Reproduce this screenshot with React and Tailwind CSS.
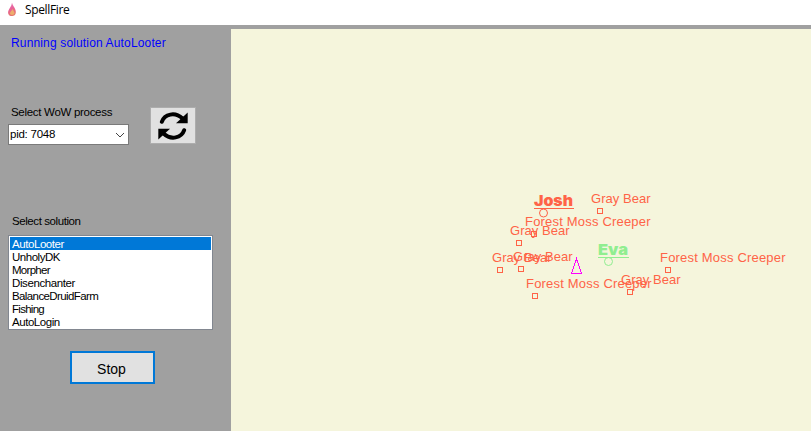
import React from "react";

const solutions = [
  ["AutoLooter", "tracking-[-0.43px]"],
  ["UnholyDK", "tracking-[-0.48px]"],
  ["Morpher", "tracking-[-0.72px]"],
  ["Disenchanter", "tracking-[-0.4px]"],
  ["BalanceDruidFarm", "tracking-[-0.6px]"],
  ["Fishing", "tracking-[-0.72px]"],
  ["AutoLogin", "tracking-[-0.45px]"],
];

// Each unit has a label start, a label baseline and a marker centre.
const units = [
  { name: "Gray Bear", x: 591, y: 203, mx: 600, my: 211 },
  { name: "Forest Moss Creeper", x: 525, y: 226, mx: 534, my: 234 },
  { name: "Gray Bear", x: 510, y: 235, mx: 519, my: 243 },
  { name: "Gray Bear", x: 492, y: 262, mx: 500, my: 270 },
  { name: "Gray Bear", x: 513, y: 261, mx: 521, my: 269 },
  { name: "Forest Moss Creeper", x: 526, y: 288, mx: 535, my: 296 },
  { name: "Gray Bear", x: 621, y: 284, mx: 630, my: 292 },
  { name: "Forest Moss Creeper", x: 660, y: 262, mx: 668, my: 270 },
];

const players = [
  { name: "Josh", x: 534, y: 206, w: 39, mx: 543.5, my: 213, color: "#ff6347" },
  { name: "Eva", x: 598, y: 255, w: 30, mx: 608.5, my: 261.5, color: "#90ee90" },
];

function Flame() {
  return (
    <svg className="h-4 w-4 shrink-0" viewBox="0 0 16 16">
      <defs>
        <linearGradient id="flame" x1="0" y1="0" x2="0.3" y2="1">
          <stop offset="0" stopColor="#e58cc0" />
          <stop offset="0.5" stopColor="#e9609a" />
          <stop offset="1" stopColor="#e5776c" />
        </linearGradient>
      </defs>
      <path d="M8 0.800C8.500 3.500 10.500 5 11.300 7.500C12.600 11 11.500 13.800 8.300 14C5 14.200 3.500 12 4.300 9C5 6.500 7.600 4.500 8 0.800Z" fill="url(#flame)" />
      <path d="M8.500 7C8 9 6 9.500 6 11.500C6 13.500 10.500 13.500 10.500 11C10.500 9.500 9 8.500 8.500 7Z" fill="#edae6d" />
    </svg>
  );
}

function RefreshIcon() {
  return (
    <svg className="h-[30px] w-[30px]" viewBox="0 0 30 30">
      <path d="M3.800 10.800C6.500 3 17 0.500 24.500 7.500" fill="none" stroke="#000" strokeWidth="4" strokeLinecap="round" />
      <path d="M29.700 1.500V12.300H18Z" />
      <path d="M26.200 19.200C23.500 27 13 29.500 5.500 22.500" fill="none" stroke="#000" strokeWidth="4" strokeLinecap="round" />
      <path d="M0.300 28.500V17.700H12Z" />
    </svg>
  );
}

function Radar() {
  return (
    <svg className="block h-[402px] w-[580px] font-['Liberation_Sans',Arial,sans-serif]" viewBox="231 29 580 402">
      {units.map((u) => (
        <g key={`${u.mx}-${u.my}`}>
          <text x={u.x} y={u.y} fontSize="13" fill="#ff6347" textLength={u.name === "Gray Bear" ? 59.5 : 125.5}>
            {u.name}
          </text>
          <rect x={u.mx - 2.5} y={u.my - 2.5} width="5" height="5" fill="none" stroke="#ff6347" shapeRendering="crispEdges" />
        </g>
      ))}
      {players.map((p) => (
        <g key={p.name}>
          <text className="font-['Inter','Liberation_Sans',sans-serif] font-black" x={p.x} y={p.y} fontSize="15" fill={p.color} textLength={p.w} lengthAdjust="spacingAndGlyphs">
            {p.name}
          </text>
          <rect x={p.x} y={p.y + 2} width={p.w + 1} height="1" fill={p.color} />
          <circle cx={p.mx} cy={p.my} r="4" fill="none" stroke={p.color} />
        </g>
      ))}
      <path d="M576.500 259L571.500 273.500H581.500Z" fill="none" stroke="#ff00ff" shapeRendering="crispEdges" />
    </svg>
  );
}

export default function App() {
  return (
    <div className="flex h-[431px] w-[811px] flex-col overflow-hidden bg-[#a0a0a0] font-['Liberation_Sans',Arial,sans-serif] text-black">
      <header className="flex h-[25px] shrink-0 items-start gap-[5px] bg-white pl-1 pt-[2px]">
        <Flame />
        <span className="font-['Open_Sans','Noto_Sans',sans-serif] text-[12px] leading-4 tracking-[-0.35px]">SpellFire</span>
      </header>
      <div className="flex min-h-0 flex-1">
        <aside className="flex w-[231px] shrink-0 flex-col pl-2">
          <p className="mt-[10px] pl-[3px] text-[12px] leading-4 tracking-[0.15px] text-[#0000ff]">Running solution AutoLooter</p>
          <div className="mt-[53px] flex">
            <div className="w-[121px]">
              <p className="pl-[3px] text-[11.5px] leading-4 tracking-[-0.3px]">Select WoW process</p>
              <div className="mt-1 flex h-[21px] items-center justify-between border border-[#7a7a7a] bg-white pl-[1px] pr-[3px] text-[11.5px] tracking-[-0.25px]">
                <span>pid: 7048</span>
                <svg className="h-[6px] w-[10px]" viewBox="0 0 10 6">
                  <path d="M1 1L5 5L9 1" fill="none" stroke="#444" />
                </svg>
              </div>
            </div>
            <button className="ml-[21px] mt-[3px] flex h-[37px] w-[46px] items-center justify-center border border-[#adadad] bg-[#e1e1e1]">
              <RefreshIcon />
            </button>
          </div>
          <p className="mt-[68px] pl-1 text-[11.5px] leading-4 tracking-[-0.42px]">Select solution</p>
          <ul className="mt-[6px] h-[95px] w-[205px] border border-[#828790] bg-white p-px">
            {solutions.map(([name, spacing], i) => (
              <li key={name} className={`h-[13px] pl-[2px] text-[11.5px] leading-[14px] ${spacing} ${i === 0 ? "bg-[#0078d7] text-white" : ""}`}>
                {name}
              </li>
            ))}
          </ul>
          <button className="ml-[62px] mt-[21px] flex h-[33px] w-[85px] items-center justify-center border-2 border-[#0078d7] bg-[#e1e1e1] pr-[2px] pt-[2px] text-[14px] leading-4">
            Stop
          </button>
        </aside>
        <main className="mt-1 h-[402px] w-[580px] bg-[#f5f5dc]">
          <Radar />
        </main>
      </div>
    </div>
  );
}
